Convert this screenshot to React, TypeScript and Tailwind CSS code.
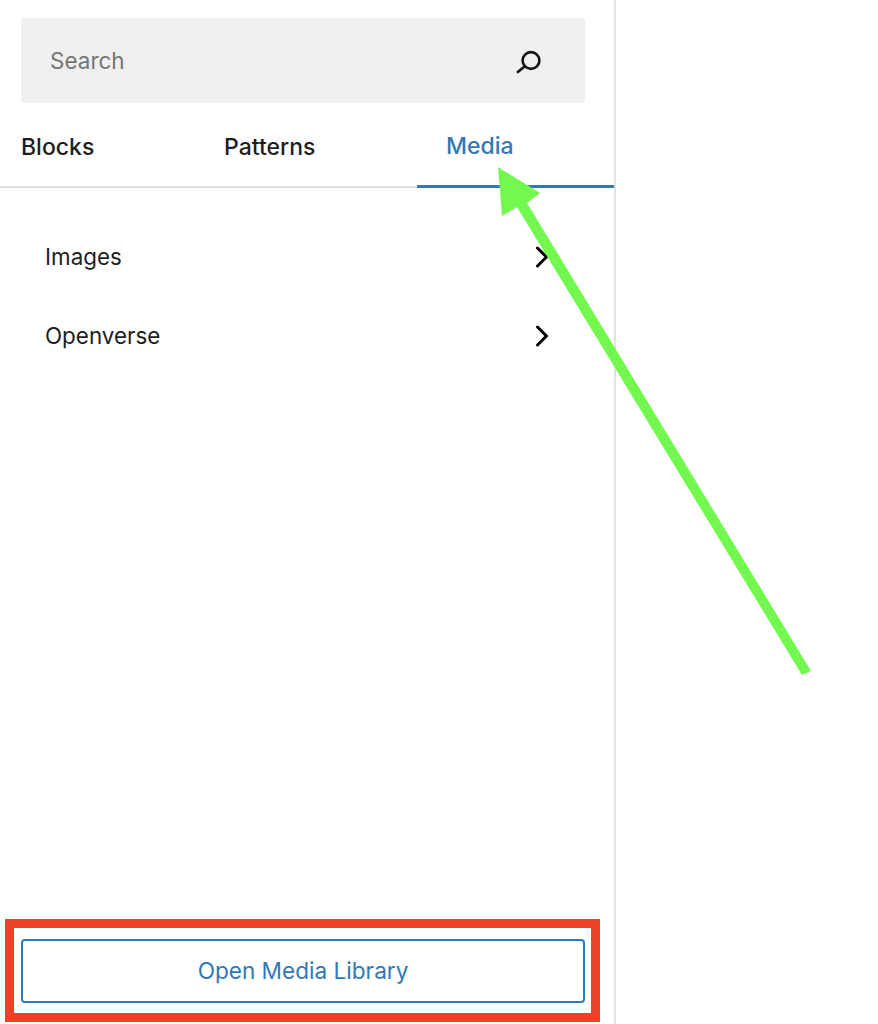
import { ChevronRight } from "lucide-react";

const TABS = ["Blocks", "Patterns", "Media"];

function SearchIcon() {
  return (
    <svg width="28" height="28" viewBox="0 0 28 28" fill="none" stroke="#111" strokeWidth="2.6">
      <circle cx="16" cy="13.5" r="8.4" />
      <path d="M9.6 19.6L2.8 25" strokeLinecap="round" />
    </svg>
  );
}

export default function App() {
  return (
    <div
      className="relative h-[1024px] w-[878px] overflow-hidden bg-white text-[#1e1e1e]"
      style={{ fontFamily: "Inter, 'Liberation Sans', sans-serif" }}
    >
      <aside className="flex h-full w-[616px] flex-col border-r-2 border-[#e2e2e2]">
        <div className="mx-[21px] mt-[18px] flex h-[85px] w-[564px] items-center justify-between rounded bg-[#efefef] pl-[29px] pr-[42px]">
          <span className="text-[22.5px] text-[#757575]">Search</span>
          <SearchIcon />
        </div>

        <div className="mt-[16px] flex h-[69px] border-b-2 border-[#e0e0e0]">
          {TABS.map((tab) => (
            <div
              key={tab}
              className={`-mb-[2px] flex items-center pb-[12px] text-[23px] font-medium ${
                tab === "Media" ? "grow border-b-[3px] border-[#3278b5] pl-[29px] text-[#3278b5]" : ""
              } ${tab === "Blocks" ? "ml-[21px] w-[173px]" : ""} ${
                tab === "Patterns" ? "w-[223px] pl-[30px]" : ""
              }`}
            >
              {tab}
            </div>
          ))}
        </div>

        <div className="mt-[29px] flex flex-col">
          {["Images", "Openverse"].map((row) => (
            <div key={row} className="flex h-[79px] items-center justify-between pl-[45px] pr-[54px]">
              <span className="text-[22.4px]">{row}</span>
              <ChevronRight className="h-[36px] w-[36px] text-black" strokeWidth={2} />
            </div>
          ))}
        </div>

        <button className="mx-[21px] mb-[21px] mt-auto flex h-[64px] w-[564px] items-center justify-center rounded border-2 border-[#3278b5] bg-white text-[22.6px] text-[#3278b5]">
          Open Media Library
        </button>
      </aside>

      {/* annotations on top of the screenshot */}
      <div className="absolute left-[5px] top-[919px] h-[103px] w-[595px] border-[9px] border-[#ec4225]" />
      <svg className="absolute left-0 top-0" width="878" height="1024" viewBox="0 0 878 1024">
        <polygon
          points="498,167 540,193 527,203 811,671 802,675 517,207 502,216"
          fill="#72f84e"
        />
      </svg>
    </div>
  );
}
